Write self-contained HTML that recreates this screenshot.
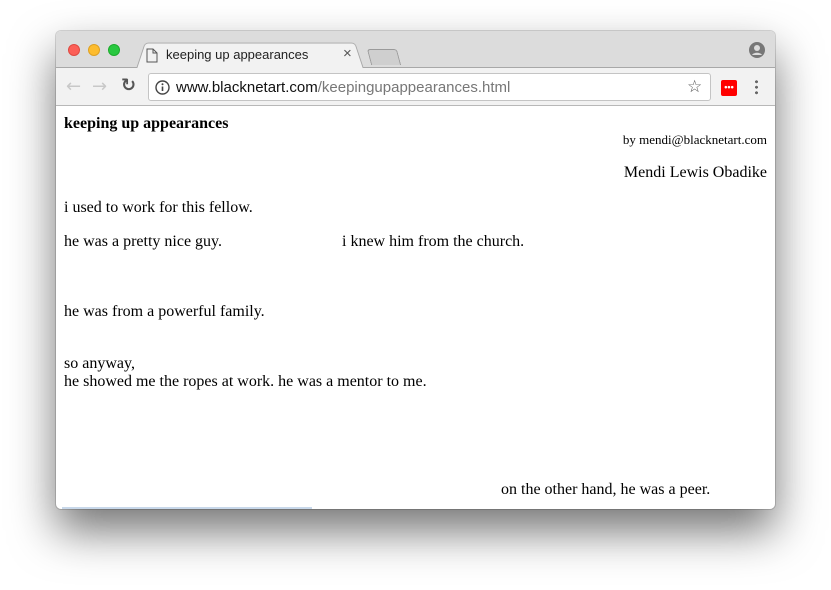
<!DOCTYPE html>
<html><head><meta charset="utf-8"><style>
*{margin:0;padding:0;box-sizing:border-box}
body{width:831px;height:590px;background:#fff;position:relative;overflow:hidden;font-family:"Liberation Serif",serif}
.win{position:absolute;left:56px;top:31px;width:719px;height:478px;border-radius:5px;overflow:hidden;background:#fff;box-shadow:0 22px 45px rgba(0,0,0,.55),0 0 0 1px rgba(0,0,0,.15)}
.tabbar{position:absolute;left:0;top:0;width:719px;height:37px;background:#dcdcdc;border-bottom:1px solid #a8a8a8}
.dot{position:absolute;top:13px;width:12px;height:12px;border-radius:50%}
.tab{position:absolute;left:80px;top:9px;width:228px;height:29px;background:#f2f2f2;border:1px solid #a8a8a8;border-bottom:none;transform:perspective(60px) rotateX(10deg);transform-origin:bottom;border-radius:4px 4px 0 0}
.tabtxt{position:absolute;left:110px;top:16px;font:13px "Liberation Sans",sans-serif;color:#222}
.toolbar{position:absolute;left:0;top:37px;width:719px;height:38px;background:#f2f2f2;border-bottom:1px solid #b8b8b8}
.omni{position:absolute;left:92px;top:5px;width:563px;height:28px;background:#fff;border:1px solid #c4c4c4;border-radius:3px}
.url{position:absolute;left:27px;top:5px;font:15px "Liberation Sans",sans-serif;color:#111}
.url span{color:#777}
.c{position:absolute;color:#000;font-size:16px;white-space:nowrap}
</style></head><body>
<div class="win">
 <div class="tabbar">
  <div class="dot" style="left:12px;background:#fc5f57;border:1px solid #de4a42"></div>
  <div class="dot" style="left:32px;background:#fdbc2e;border:1px solid #dea123"></div>
  <div class="dot" style="left:52px;background:#29c840;border:1px solid #1dac2c"></div>
  <div class="tab"></div>
  <svg style="position:absolute;left:90px;top:17px" width="12" height="15"><path d="M1 1h6l4 4v9H1z M7 1v4h4" fill="none" stroke="#555" stroke-width="1"/></svg>
  <div class="tabtxt">keeping up appearances</div>
  <div style="position:absolute;left:287px;top:14px;font:15px 'Liberation Sans',sans-serif;color:#555">×</div>
  <div style="position:absolute;left:313px;top:18px;width:30px;height:16px;background:#cfcfcf;border:1px solid #9a9a9a;border-bottom:none;transform:skewX(15deg);border-radius:3px 3px 0 0"></div>
  <svg style="position:absolute;left:693px;top:11px" width="16" height="16"><circle cx="8" cy="8" r="8" fill="#777"/><circle cx="8" cy="6" r="3" fill="#dcdcdc"/><path d="M3 13c1.5-3 8.5-3 10 0" fill="#dcdcdc"/></svg>
 </div>
 <div class="toolbar">
  <div style="position:absolute;left:10px;top:8px;font:18px 'DejaVu Sans',sans-serif;color:#c8c8c8">←</div>
  <div style="position:absolute;left:36px;top:8px;font:18px 'DejaVu Sans',sans-serif;color:#c8c8c8">→</div>
  <div style="position:absolute;left:65px;top:7px;font:bold 18px 'DejaVu Sans',sans-serif;color:#555">↻</div>
  <div class="omni">
   <svg style="position:absolute;left:6px;top:6px" width="15" height="15"><circle cx="7.5" cy="7.5" r="6.5" fill="none" stroke="#444" stroke-width="1.4"/><path d="M7.5 6.5v4.5" stroke="#444" stroke-width="1.6"/><circle cx="7.5" cy="4.3" r="1" fill="#444"/></svg>
   <div class="url">www.blacknetart.com<span>/keepingupappearances.html</span></div>
   <div style="position:absolute;left:538px;top:3px;font:17px 'DejaVu Sans',sans-serif;color:#555">☆</div>
  </div>
  <div style="position:absolute;left:665px;top:12px;width:16px;height:16px;background:#f00;border-radius:2px;color:#fff;font:bold 9px sans-serif;text-align:center;line-height:14px">•••</div>
  <div style="position:absolute;left:699px;top:11px;width:3px;height:16px;background:radial-gradient(circle,#666 1.4px,transparent 1.6px) 0 0/3px 5.5px"></div>
 </div>
 <div class="c" style="left:8px;top:84px;font-weight:bold">keeping up appearances</div>
 <div class="c" style="right:8px;top:101px;font-size:13px">by mendi@blacknetart.com</div>
 <div class="c" style="right:8px;top:133px">Mendi Lewis Obadike</div>
 <div class="c" style="left:8px;top:168px">i used to work for this fellow.</div>
 <div class="c" style="left:8px;top:202px">he was a pretty nice guy.</div>
 <div class="c" style="left:286px;top:202px">i knew him from the church.</div>
 <div class="c" style="left:8px;top:272px">he was from a powerful family.</div>
 <div class="c" style="left:8px;top:324px">so anyway,</div>
 <div class="c" style="left:8px;top:342px">he showed me the ropes at work. he was a mentor to me.</div>
 <div class="c" style="left:445px;top:450px">on the other hand, he was a peer.</div>
 <div style="position:absolute;left:6px;top:476px;width:250px;height:2px;background:#c8d8ea"></div>
</div>
</body></html>
